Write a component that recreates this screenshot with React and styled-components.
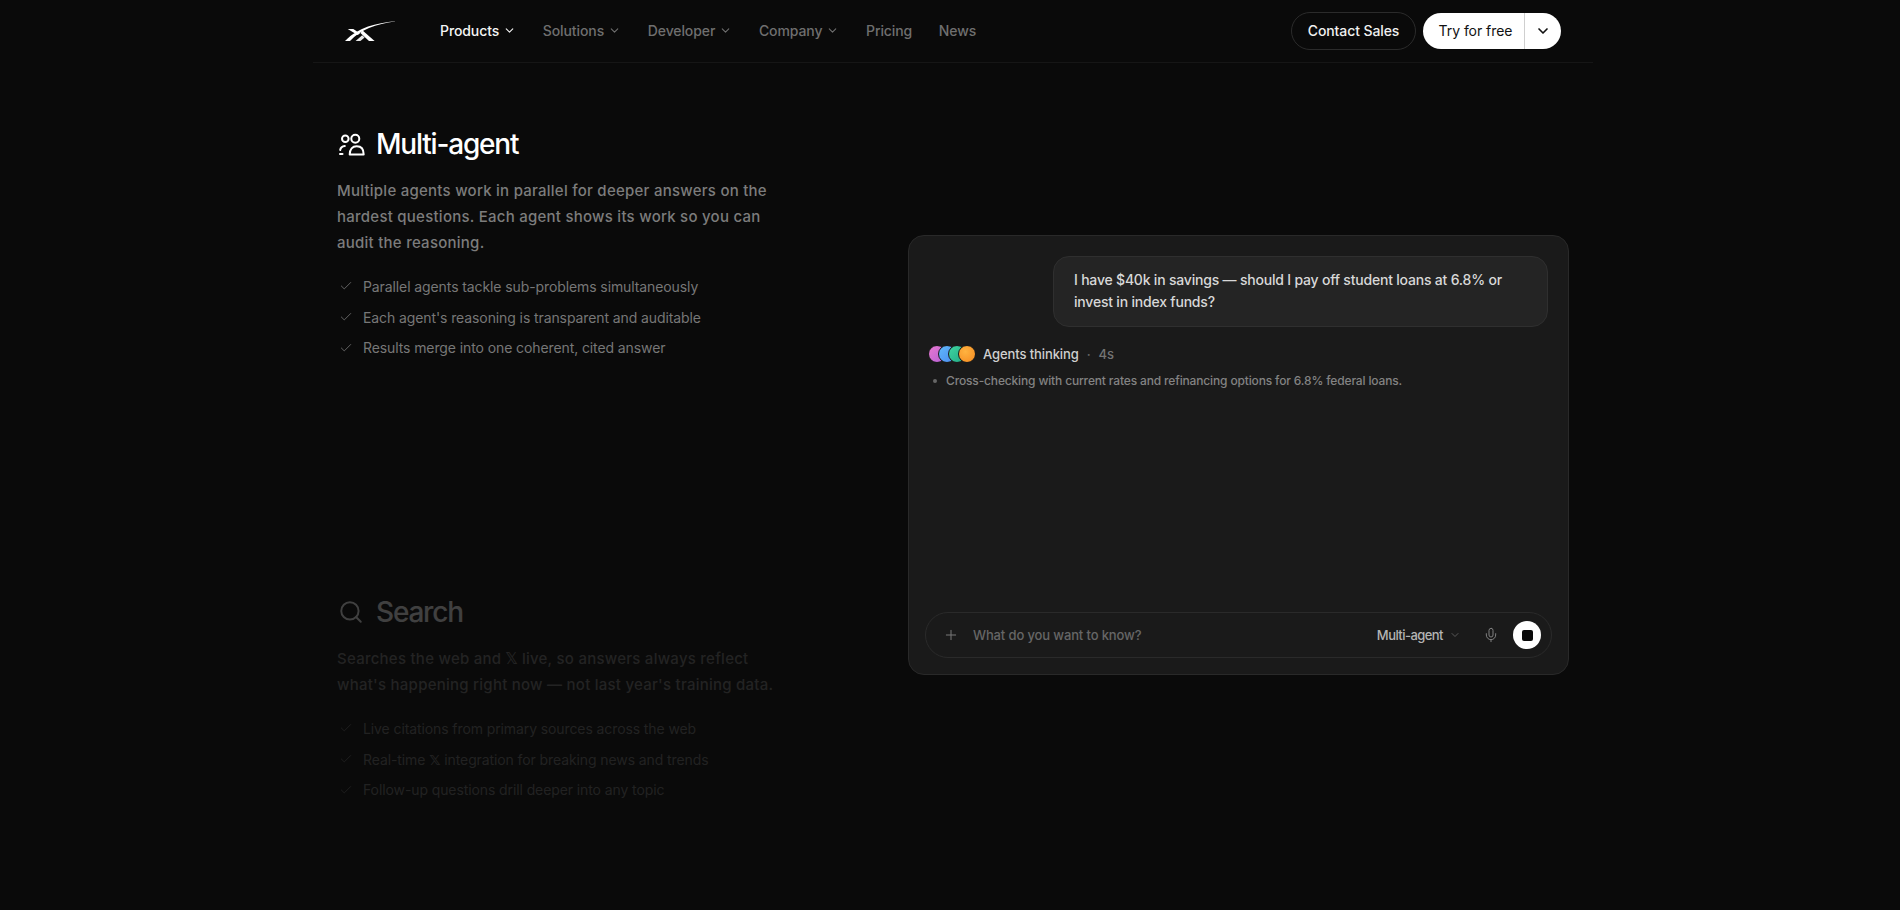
import React from 'react';
import styled, { createGlobalStyle } from 'styled-components';
import { ChevronDown, Check, Search as SearchIcon, Plus, Mic } from 'lucide-react';

const Global = createGlobalStyle`
  html, body { margin: 0; padding: 0; background: #0a0a0a; }
  body { font-family: Inter, "DejaVu Sans", "Liberation Sans", sans-serif; color: #fff; height: 910px; overflow: hidden; }
  * { box-sizing: border-box; }
`;
const Page = styled.div`
  width: 1280px;
  margin-left: 313px;
`;
const Header = styled.header`
  height: 63px;
  border-bottom: 1px solid #161616;
  display: flex;
  align-items: center;
  padding: 0 32px 1px 32px;
`;
const LogoLink = styled.a`
  display: flex;
  width: 95px;
`;
const Nav = styled.nav`
  display: flex;
  align-items: center;
  gap: 26.7px;
  flex: 1;
`;
const NavItem = styled.a`
  display: flex;
  align-items: center;
  gap: 4px;
  font-size: 14px;
  font-weight: 500;
  letter-spacing: -0.1px;
  color: ${p => (p.$active ? '#f5f5f5' : '#6f6f6f')};
`;
const Actions = styled.div`
  display: flex;
  align-items: center;
  gap: 7px;
`;
const ContactButton = styled.button`
  height: 38px;
  width: 125px;
  border: 1px solid #2b2b2b;
  border-radius: 19px;
  background: transparent;
  color: #f0f0f0;
  font: 500 14px Inter, sans-serif;
  letter-spacing: -0.1px;
`;
const SplitButton = styled.div`
  display: flex;
  height: 36px;
  width: 138px;
  border-radius: 18px;
  background: #fff;
  color: #111;
  align-items: center;
`;
const SplitLabel = styled.span`
  width: 102px;
  height: 100%;
  display: flex;
  align-items: center;
  justify-content: center;
  padding-left: 4px;
  font-size: 14px;
  letter-spacing: -0.05px;
  border-right: 1px solid #cfcfcf;
`;
const SplitCaret = styled.span`
  flex: 1;
  display: flex;
  align-items: center;
  justify-content: center;
`;
const Main = styled.main`
  display: grid;
  grid-template-columns: 571px 661px;
  padding-left: 24px;
`;
const Features = styled.div`
  padding-top: 62px;
`;
const Feature = styled.section`
  height: 468px;
  opacity: ${p => (p.$dim ? 0.22 : 1)};
`;
const Title = styled.h2`
  margin: 0;
  height: 38px;
  display: flex;
  align-items: center;
  gap: 11px;
  font-size: 28px;
  font-weight: 500;
  letter-spacing: -1.2px;
  color: #fff;
`;
const IconSlot = styled.span`
  display: flex;
  width: 28px;
  justify-content: center;
`;
const Desc = styled.p`
  margin: 15px 0 0;
  width: 445px;
  font-size: 15px;
  font-weight: 500;
  line-height: 26px;
  letter-spacing: 0.25px;
  color: #7c7c7c;
`;
const DoubleStruck = styled.b`
  display: inline-block;
  font-weight: 700;
  letter-spacing: 0;
  font-family: "DejaVu Sans", sans-serif;
`;
const List = styled.ul`
  list-style: none;
  margin: 15px 0 0;
  padding: 0;
`;
const ListItem = styled.li`
  height: 30.8px;
  display: flex;
  align-items: center;
  gap: 10px;
  padding-left: 2px;
  font-size: 14px;
  letter-spacing: -0.1px;
  color: #777;
  white-space: pre;
  svg { color: #6e6e6e; flex: none; }
`;
const CardColumn = styled.div`
  padding-top: 172px;
`;
const Card = styled.div`
  height: 440px;
  padding: 20px 17px 16px;
  background: #1a1a1a;
  border: 1px solid #292929;
  border-radius: 16px;
  display: flex;
  flex-direction: column;
`;
const Bubble = styled.div`
  align-self: flex-end;
  width: 495px;
  margin-right: 3px;
  height: 71px;
  padding: 12px 20px;
  background: #242424;
  border: 1px solid #2f2f2f;
  border-radius: 16px;
  font-size: 14px;
  font-weight: 500;
  line-height: 22px;
  letter-spacing: -0.2px;
  color: #d8d8d8;
`;
const Thinking = styled.div`
  display: flex;
  align-items: center;
  margin-top: 17px;
  height: 20px;
  font-size: 13px;
  font-weight: 500;
  letter-spacing: -0.1px;
  color: #d0d0d0;
`;
const Avatars = styled.div`
  display: flex;
  margin-right: 7px;
  padding-left: 2px;
`;
const Avatar = styled.span`
  width: 18px;
  height: 18px;
  border-radius: 50%;
  border: 1px solid #1a1a1a;
  margin-left: -8px;
  &:first-child { margin-left: 0; }
  background: ${p => p.$bg};
`;
const Dot = styled.span`
  margin: 0 8px;
  color: #666;
`;
const Elapsed = styled.span`
  color: #747474;
`;
const Step = styled.div`
  display: flex;
  align-items: center;
  margin-top: 9px;
  padding-left: 7px;
  font-size: 12px;
  font-weight: 500;
  letter-spacing: -0.15px;
  color: #838383;
  &::before {
    content: '';
    width: 4px;
    height: 4px;
    border-radius: 50%;
    background: #666;
    margin-right: 9px;
  }
`;
const Composer = styled.div`
  margin-top: auto;
  margin-left: -1px;
  margin-right: -1px;
  width: 627px;
  height: 46px;
  border: 1px solid #2a2a2a;
  border-radius: 23px;
  display: flex;
  align-items: center;
  padding: 0 10px 0 17px;
  color: #787878;
`;
const Placeholder = styled.span`
  flex: 1;
  margin-left: 14px;
  font-size: 13px;
  font-weight: 500;
  letter-spacing: -0.13px;
  color: #666;
`;
const ModelPicker = styled.span`
  display: flex;
  align-items: center;
  gap: 6px;
  font-size: 13px;
  font-weight: 500;
  letter-spacing: -0.55px;
  color: #b4b4b4;
  svg { color: #6c6c6c; }
`;
const MicSlot = styled.span`
  display: flex;
  margin: 0 14px 0 22px;
  color: #808080;
`;
const StopButton = styled.span`
  width: 28px;
  height: 28px;
  border-radius: 50%;
  background: #fff;
  display: flex;
  align-items: center;
  justify-content: center;
  &::after {
    content: '';
    width: 11px;
    height: 11px;
    border-radius: 2px;
    background: #0a0a0a;
  }
`;

const Logo = () => (
  <svg width="50" height="20" viewBox="0 0 50 20" fill="#fff">
    <path d="M0 20 C7 13 15 8.5 23 5.6 C31 2.8 41 1 50 .2 L50 .6 C41 1.8 32 3.8 24 7 C17 9.8 10 14.5 5 20 Z" />
    <path d="M2.7 8 H8.3 L15 12.6 L12.6 14 Z" />
    <path d="M17.6 9.6 L29.6 20 H24 L15.4 12 Z" />
    <path d="M10.6 20 L17.2 14.2 L19.6 16.4 L15.4 20 Z" opacity="0.9" />
  </svg>
);

const UsersGlyph = () => (
  <svg width="28" height="24" viewBox="0 0 28 24" fill="none" stroke="#fff" strokeWidth="2">
    <circle cx="8.3" cy="6.7" r="3.3" />
    <circle cx="18.3" cy="6.7" r="4" />
    <path d="M3.2 18 C3.6 15.6 5.5 14.2 7.8 14" strokeLinecap="round" />
    <path d="M3 22 H5.5" strokeLinecap="round" />
    <path d="M12.7 22.5 C12.7 17 15.5 14.2 19.7 14.2 C23.9 14.2 26.7 17 26.7 22.5 Z" strokeLinejoin="round" />
  </svg>
);

const navItems = [
  ['Products', true, true],
  ['Solutions', true],
  ['Developer', true],
  ['Company', true],
  ['Pricing'],
  ['News'],
];
const X = <DoubleStruck>{'\u{1D54F}'}</DoubleStruck>;
const features = [
  {
    title: 'Multi-agent',
    icon: <UsersGlyph />,
    desc: 'Multiple agents work in parallel for deeper answers on the hardest questions. Each agent shows its work so you can audit the reasoning.',
    items: ['Parallel agents tackle sub-problems simultaneously', "Each agent's reasoning is transparent and auditable", 'Results merge into one coherent, cited answer'],
  },
  {
    title: 'Search',
    dim: true,
    icon: <SearchIcon size={26} strokeWidth={1.8} />,
    desc: <>Searches the web and {X} live, so answers always reflect what's happening right now — not last year's training data.</>,
    items: ['Live citations from primary sources across the web', <span key="x">Real-time {X} integration for breaking news and trends</span>, 'Follow-up questions drill deeper into any topic'],
  },
];
const avatarFills = [
  'linear-gradient(135deg,#e879d0,#b65fd6)',
  'linear-gradient(135deg,#60b8f8,#4a8cf0)',
  'linear-gradient(135deg,#3fd6a0,#22a884)',
  'radial-gradient(circle at 40% 35%,#ffb340,#f58a20)',
];

export default function App() {
  return (
    <Page>
      <Global />
      <Header>
        <LogoLink><Logo /></LogoLink>
        <Nav>
          {navItems.map(([label, caret, active]) => (
            <NavItem key={label} $active={active}>
              {label}
              {caret && <ChevronDown size={13} strokeWidth={2} />}
            </NavItem>
          ))}
        </Nav>
        <Actions>
          <ContactButton>Contact Sales</ContactButton>
          <SplitButton>
            <SplitLabel>Try for free</SplitLabel>
            <SplitCaret><ChevronDown size={16} strokeWidth={2.5} /></SplitCaret>
          </SplitButton>
        </Actions>
      </Header>
      <Main>
        <Features>
          {features.map(f => (
            <Feature key={f.title} $dim={f.dim}>
              <Title><IconSlot>{f.icon}</IconSlot>{f.title}</Title>
              <Desc>{f.desc}</Desc>
              <List>
                {f.items.map((t, i) => (
                  <ListItem key={i}><Check size={14} strokeWidth={1.5} />{t}</ListItem>
                ))}
              </List>
            </Feature>
          ))}
        </Features>
        <CardColumn>
          <Card>
            <Bubble>I have $40k in savings — should I pay off student loans at 6.8% or invest in index funds?</Bubble>
            <Thinking>
              <Avatars>{avatarFills.map(b => <Avatar key={b} $bg={b} />)}</Avatars>
              Agents thinking<Dot>·</Dot><Elapsed>4s</Elapsed>
            </Thinking>
            <Step>Cross-checking with current rates and refinancing options for 6.8% federal loans.</Step>
            <Composer>
              <Plus size={16} strokeWidth={1.5} />
              <Placeholder>What do you want to know?</Placeholder>
              <ModelPicker>Multi-agent<ChevronDown size={12} strokeWidth={1.5} /></ModelPicker>
              <MicSlot><Mic size={16} strokeWidth={1.5} /></MicSlot>
              <StopButton />
            </Composer>
          </Card>
        </CardColumn>
      </Main>
    </Page>
  );
}
